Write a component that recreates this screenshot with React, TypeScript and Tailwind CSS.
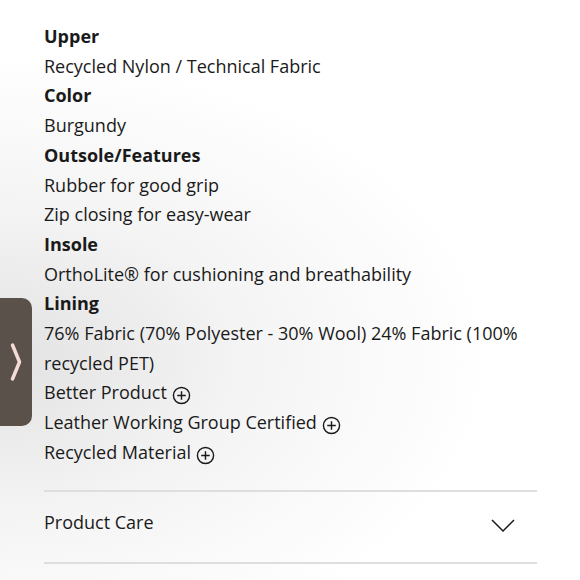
import { Fragment } from 'react';

const specs: { label: string; lines: string[] }[] = [
  { label: 'Upper', lines: ['Recycled Nylon / Technical Fabric'] },
  { label: 'Color', lines: ['Burgundy'] },
  { label: 'Outsole/Features', lines: ['Rubber for good grip', 'Zip closing for easy-wear'] },
  { label: 'Insole', lines: ['OrthoLite® for cushioning and breathability'] },
  { label: 'Lining', lines: ['76% Fabric (70% Polyester - 30% Wool) 24% Fabric (100% recycled PET)'] },
];

const badges = ['Better Product', 'Leather Working Group Certified', 'Recycled Material'];

function PlusCircle() {
  return (
    <svg width="19" height="19" viewBox="0 0 20 20" className="inline-block ml-[5px] -mb-[2px]" fill="none" stroke="#1a1a1a" strokeWidth="1.5">
      <circle cx="10" cy="10" r="8.5" />
      <path d="M10 5.5v9M5.5 10h9" />
    </svg>
  );
}

export default function App() {
  return (
    <div
      className="relative w-[580px] h-[580px] overflow-hidden bg-[radial-gradient(ellipse_at_0%_62%,#e2e2e2_0%,#f4f4f4_30%,#ffffff_60%)] text-[#1a1a1a]"
      style={{ fontFamily: '"Open Sans", "Noto Sans", sans-serif' }}
    >
      {/* side tab */}
      <div className="absolute left-0 top-[298px] w-[32px] h-[128px] rounded-r-[10px] bg-[#5b514b] flex items-center justify-center">
        <svg width="14" height="40" viewBox="0 0 14 40" fill="none" stroke="#f2dcd5" strokeWidth="3.5" strokeLinecap="round" strokeLinejoin="round">
          <path d="M3.5 3l7 17-7 17" />
        </svg>
      </div>

      <div className="pl-[44px] pr-[43px] pt-[22px] text-[18px] leading-[29.7px]">
        {specs.map((s) => (
          <Fragment key={s.label}>
            <div className="font-bold">{s.label}</div>
            {s.lines.map((l) => (
              <div key={l}>{l}</div>
            ))}
          </Fragment>
        ))}
        {badges.map((b) => (
          <div key={b}>
            {b}
            <PlusCircle />
          </div>
        ))}

        <div className="mt-[22px] border-t-2 border-b-2 border-[#dedede] h-[74px] flex items-center justify-between pb-[8px]">
          <span>Product Care</span>
          <svg width="24" height="14" viewBox="0 0 24 14" fill="none" stroke="#1a1a1a" strokeWidth="1.5" className="mr-[22px] mt-[6px]">
            <path d="M1 1l11 11L23 1" />
          </svg>
        </div>
      </div>
    </div>
  );
}
